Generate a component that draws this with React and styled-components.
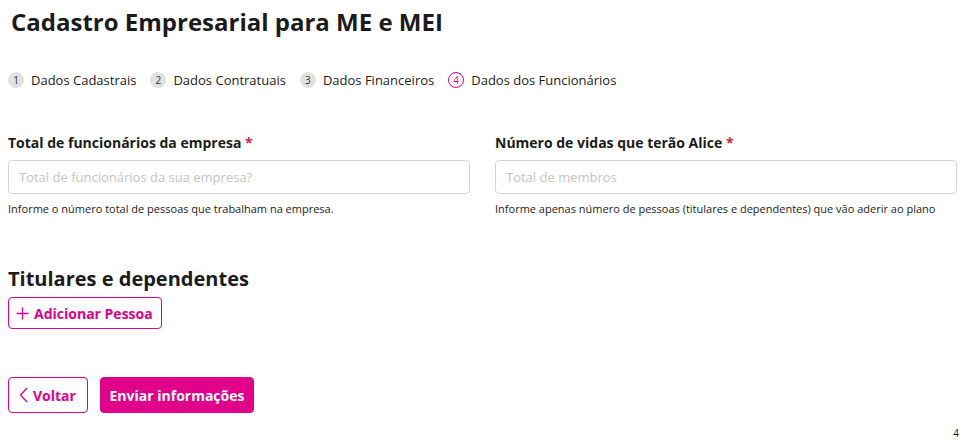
import React from 'react';
import styled, { createGlobalStyle } from 'styled-components';

const pink = '#e0008a';

const GlobalStyle = createGlobalStyle`
  * { box-sizing: border-box; }
  body {
    margin: 0;
    font-family: 'Open Sans', 'Noto Sans', sans-serif;
    color: #1b1b1b;
    background: #fff;
  }
`;

const steps = ['Dados Cadastrais', 'Dados Contratuais', 'Dados Financeiros', 'Dados dos Funcionários'];

const App = () => (
  <>
    <GlobalStyle />
    <Page>
      <Title>Cadastro Empresarial para ME e MEI</Title>

      <Stepper>
        {steps.map((label, i) => (
          <Step key={label}>
            <StepNumber active={i === steps.length - 1}>{i + 1}</StepNumber>
            <StepLabel>{label}</StepLabel>
          </Step>
        ))}
      </Stepper>

      <Fields>
        <Field>
          <Label>
            Total de funcionários da empresa <Required>*</Required>
          </Label>
          <Input placeholder='Total de funcionários da sua empresa?' />
          <Help>Informe o número total de pessoas que trabalham na empresa.</Help>
        </Field>
        <Field>
          <Label>
            Número de vidas que terão Alice <Required>*</Required>
          </Label>
          <Input placeholder='Total de membros' />
          <Help>Informe apenas número de pessoas (titulares e dependentes) que vão aderir ao plano</Help>
        </Field>
      </Fields>

      <SectionTitle>Titulares e dependentes</SectionTitle>
      <OutlineButton small>
        <svg width='13' height='13' viewBox='0 0 13 13' fill='none' stroke={pink} strokeWidth='1.3'>
          <path d='M6.5 0.5v12M0.5 6.5h12' />
        </svg>
        Adicionar Pessoa
      </OutlineButton>

      <Actions>
        <OutlineButton>
          <svg width='9' height='16' viewBox='0 0 9 16' fill='none' stroke={pink} strokeWidth='1.3'>
            <path d='M8 1L1.5 8 8 15' />
          </svg>
          Voltar
        </OutlineButton>
        <PrimaryButton>Enviar informações</PrimaryButton>
      </Actions>

      <PageNumber>4</PageNumber>
    </Page>
  </>
);

export default App;

const Page = styled.div`
  padding: 8px;
  width: 967px;
  height: 448px;
  position: relative;
`;

const Title = styled.h1`
  margin: 0 0 0 3px;
  font-size: 24px;
  font-weight: 700;
  line-height: 28px;
  color: #1b1b1b;
`;

const Stepper = styled.div`
  display: flex;
  gap: 14px;
  margin-top: 35px;
  align-items: center;
`;

const Step = styled.div`
  display: flex;
  align-items: center;
  gap: 7px;
`;

const StepNumber = styled.span`
  width: 16px;
  height: 16px;
  border-radius: 50%;
  display: flex;
  align-items: center;
  justify-content: center;
  font-size: 10px;
  background: ${p => (p.active ? '#fff' : '#e1e1e1')};
  border: 1px solid ${p => (p.active ? pink : '#e1e1e1')};
  color: ${p => (p.active ? pink : '#333')};
`;

const StepLabel = styled.span`
  font-size: 13px;
  color: #1b1b1b;
`;

const Fields = styled.div`
  display: grid;
  grid-template-columns: 462px 462px;
  column-gap: 25px;
  margin-top: 44px;
`;

const Field = styled.div`
  display: flex;
  flex-direction: column;
`;

const Label = styled.label`
  font-size: 14px;
  font-weight: 700;
  line-height: 20px;
`;

const Required = styled.span`
  color: #d4213d;
`;

const Input = styled.input`
  margin-top: 7px;
  height: 34px;
  border: 1px solid #d4d4d4;
  border-radius: 4px;
  padding: 0 10px;
  font-family: inherit;
  font-size: 13px;
  outline: none;

  &::placeholder {
    color: #c4c4c4;
  }
`;

const Help = styled.span`
  margin-top: 8px;
  font-size: 11px;
  line-height: 14px;
  color: #1b1b1b;
`;

const SectionTitle = styled.h2`
  margin: 49px 0 0;
  font-size: 20px;
  line-height: 28px;
  font-weight: 700;
`;

const OutlineButton = styled.button`
  display: flex;
  align-items: center;
  white-space: nowrap;
  gap: ${p => (p.small ? '5px' : '5px')};
  height: ${p => (p.small ? '32px' : '36px')};
  width: ${p => (p.small ? '154px' : '80px')};
  padding: 0 ${p => (p.small ? '7px' : '10px')};
  border: 1px solid ${pink};
  border-radius: 4px;
  background: #fff;
  color: ${pink};
  font-family: inherit;
  font-weight: 700;
  font-size: 14px;
  cursor: pointer;
  margin-top: ${p => (p.small ? '4px' : '0')};
`;

const Actions = styled.div`
  display: flex;
  gap: 12px;
  margin-top: 48px;
`;

const PrimaryButton = styled.button`
  height: 36px;
  width: 154px;
  padding: 0;
  white-space: nowrap;
  border: 1px solid ${pink};
  border-radius: 4px;
  background: ${pink};
  color: #fff;
  font-family: inherit;
  font-weight: 700;
  font-size: 14px;
  cursor: pointer;
`;

const PageNumber = styled.span`
  position: absolute;
  right: 8px;
  bottom: 8px;
  font-size: 10px;
  color: #1b1b1b;
`;
